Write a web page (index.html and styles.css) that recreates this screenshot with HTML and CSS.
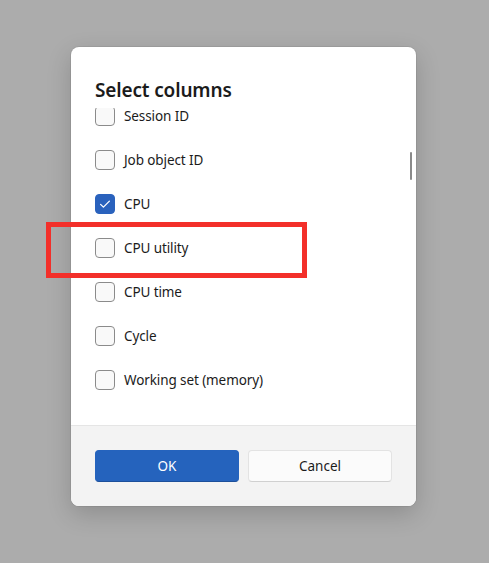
FILE: index.html
```html
<!DOCTYPE html>
<html lang="en">
<head>
<meta charset="utf-8">
<title>Select columns</title>
<link rel="stylesheet" href="styles.css">
</head>
<body>
<div class="dialog">
  <div class="body">
    <h1 class="title">Select columns</h1>
    <div class="list">
      <div class="items">
        <label class="row"><span class="box"></span><span class="label">Session ID</span></label>
        <label class="row"><span class="box"></span><span class="label">Job object ID</span></label>
        <label class="row"><span class="box checked"><svg viewBox="0 0 20 20" width="20" height="20"><path d="M5.6 10.4 L8.4 13.1 L14.4 7.1" fill="none" stroke="#fff" stroke-width="1.3" stroke-linecap="round" stroke-linejoin="round"/></svg></span><span class="label">CPU</span></label>
        <label class="row"><span class="box"></span><span class="label">CPU utility</span></label>
        <label class="row"><span class="box"></span><span class="label">CPU time</span></label>
        <label class="row"><span class="box"></span><span class="label">Cycle</span></label>
        <label class="row"><span class="box"></span><span class="label">Working set (memory)</span></label>
      </div>
      <div class="thumb"></div>
    </div>
  </div>
  <div class="footer">
    <button class="btn primary">OK</button>
    <button class="btn">Cancel</button>
  </div>
</div>
<div class="highlight"></div>
</body>
</html>
```
FILE: styles.css
```css
html, body {
  margin: 0;
  padding: 0;
}
body {
  background: #acacac;
  width: 489px;
  height: 563px;
  padding: 47px 0 0 71px;
  box-sizing: border-box;
  font-family: "Noto Sans", "Open Sans", sans-serif;
  color: #1b1b1b;
  position: relative;
  overflow: hidden;
}
.dialog {
  width: 345px;
  height: 459px;
  background: #fff;
  border-radius: 8px;
  box-shadow: 0 0 0 1px rgba(0,0,0,0.06), 0 8px 24px rgba(0,0,0,0.18);
  display: flex;
  flex-direction: column;
  overflow: hidden;
}
.body {
  flex: 1;
  display: flex;
  flex-direction: column;
  min-height: 0;
}
.title {
  margin: 0;
  padding: 26px 24px 0;
  font-size: 19px;
  font-weight: 600;
  line-height: 35px;
  height: 35px;
  letter-spacing: -0.15px;
}
.list {
  flex: 1;
  position: relative;
  overflow: hidden;
}
.items {
  margin-top: -14px;
  padding: 0 24px;
  display: flex;
  flex-direction: column;
}
.row {
  height: 44px;
  display: flex;
  align-items: center;
  gap: 9px;
}
.box {
  width: 20px;
  height: 20px;
  box-sizing: border-box;
  border: 1px solid #8b8b8b;
  border-radius: 4px;
  background: #f9f9f9;
  display: flex;
  flex: none;
}
.box.checked {
  background: #2a62bd;
  border-color: #2a62bd;
}
.box.checked svg {
  margin: -1px;
}
.label {
  font-size: 13.5px;
  color: #1b1b1b;
  letter-spacing: -0.1px;
}
.thumb {
  position: absolute;
  right: 4px;
  top: 44px;
  width: 2px;
  height: 28px;
  border-radius: 1px;
  background: #8a8a8a;
}
.footer {
  height: 81px;
  box-sizing: border-box;
  background: #f3f3f3;
  border-top: 1px solid #e5e5e5;
  padding: 24px 24px 0;
  display: flex;
  gap: 9px;
}
.btn {
  flex: 1;
  height: 32px;
  box-sizing: border-box;
  border-radius: 4px;
  border: 1px solid #e3e3e3;
  border-bottom-color: #d0d0d0;
  background: #fbfbfb;
  font-family: inherit;
  font-size: 13.5px;
  color: #1b1b1b;
  padding: 0;
}
.btn.primary {
  background: #2563bd;
  border-color: #2563bd;
  border-bottom-color: #1c4f9a;
  color: #fff;
}
.highlight {
  position: absolute;
  left: 46px;
  top: 222px;
  width: 261px;
  height: 56px;
  box-sizing: border-box;
  border: 5px solid #f32f2a;
}
```
